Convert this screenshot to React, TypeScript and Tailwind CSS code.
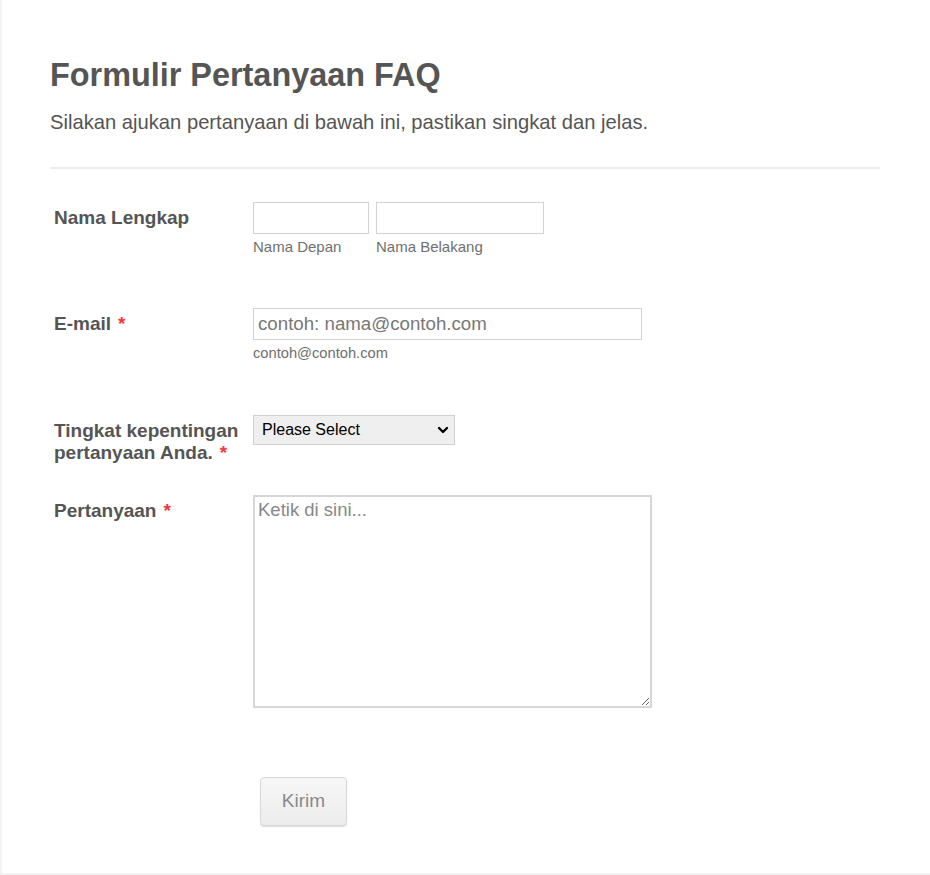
import { ChevronDown } from "lucide-react";

function Req() {
  return <span className="ml-[7px] text-[#f23a3c]">*</span>;
}

function Row({ label, children, className = "" }: { label: React.ReactNode; children: React.ReactNode; className?: string }) {
  return (
    <div className={`flex ${className}`}>
      <div className="w-[203px] shrink-0 pl-1 pr-1 pt-[5px] text-[19px] font-bold leading-[22px] text-[#555]">{label}</div>
      <div className="flex-1">{children}</div>
    </div>
  );
}

export default function App() {
  return (
    <div className="h-[875px] w-[930px] overflow-hidden bg-white font-['Liberation_Sans',Arial,sans-serif]">
      <div className="h-[875px] border-b-2 border-l-2 border-[#f3f3f3]">
        <div className="ml-[48px] w-[830px] pt-[56px]">
          <h1 className="text-[32.4px] font-bold leading-[38px] text-[#555]">Formulir Pertanyaan FAQ</h1>
          <p className="mt-4 text-[20.2px] leading-[24px] text-[#555]">
            Silakan ajukan pertanyaan di bawah ini, pastikan singkat dan jelas.
          </p>
          <div className="mt-[33px] h-[2px] bg-[#ededed]" />

          <Row label="Nama Lengkap" className="mt-[33px]">
            <div className="flex gap-[7px]">
              <div className="flex flex-col">
                <input className="h-[32px] w-[116px] border border-[#d3d3d3] bg-white px-1 outline-none" />
                <span className="mt-1 text-[15px] leading-[18px] text-[#6f6f6f]">Nama Depan</span>
              </div>
              <div className="flex flex-col">
                <input className="h-[32px] w-[168px] border border-[#d3d3d3] bg-white px-1 outline-none" />
                <span className="mt-1 text-[15px] leading-[18px] text-[#6f6f6f]">Nama Belakang</span>
              </div>
            </div>
          </Row>

          <Row label={<>E-mail<Req /></>} className="mt-[52px]">
            <div className="flex flex-col">
              <input
                placeholder="contoh: nama@contoh.com"
                className="h-[32px] w-[389px] border border-[#d3d3d3] bg-white px-1 text-[18.7px] text-[#555] outline-none placeholder:text-[#777]"
              />
              <span className="mt-1 text-[14.7px] leading-[18px] text-[#6f6f6f]">contoh@contoh.com</span>
            </div>
          </Row>

          <Row label={<>Tingkat kepentingan pertanyaan Anda.<Req /></>} className="mt-[53px]">
            <div className="relative w-[202px]">
              <select className="h-[30px] w-[202px] appearance-none rounded-none border border-[#cfcfcf] bg-[#efefef] pl-2 text-[16px] text-black outline-none">
                <option>Please Select</option>
                <option>Rendah</option>
                <option>Sedang</option>
                <option>Tinggi</option>
              </select>
              <ChevronDown className="pointer-events-none absolute right-[4px] top-[7px] h-[16px] w-[16px] text-black" strokeWidth={3.5} />
            </div>
          </Row>

          <Row label={<>Pertanyaan<Req /></>} className="mt-[31px]">
            <textarea
              placeholder="Ketik di sini..."
              className="block h-[213px] w-[399px] border-2 border-[#d6d6d6] bg-white px-[3px] pt-[2px] text-[18.5px] leading-[22px] text-[#555] outline-none placeholder:text-[#888]"
            />
          </Row>

          <div className="ml-[210px] mt-[69px]">
            <button className="h-[49px] w-[87px] rounded-[4px] border border-[#d8d8d8] bg-gradient-to-b from-[#f7f7f7] to-[#ececec] text-[19px] text-[#8a8a8a] shadow-[0_1px_1px_rgba(0,0,0,0.15)]">
              Kirim
            </button>
          </div>
        </div>
      </div>
    </div>
  );
}
